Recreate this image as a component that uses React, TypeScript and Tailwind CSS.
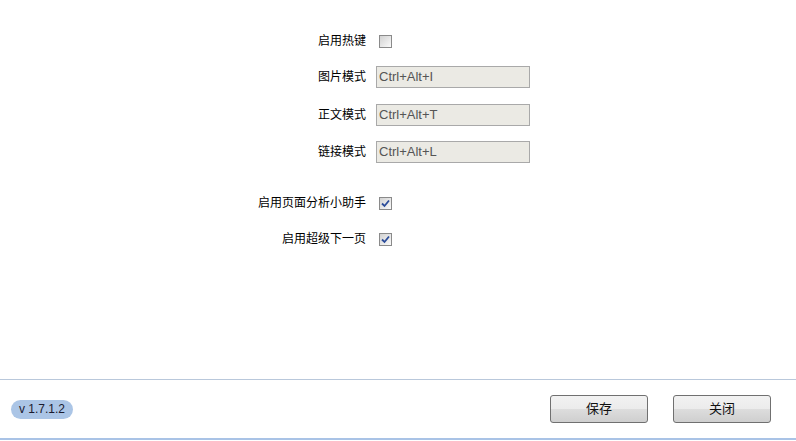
import React from "react";

const FONT = { fontFamily: '"Liberation Sans", "Noto Sans CJK SC", sans-serif' };

function Check({ checked }: { checked?: boolean }) {
  return (
    <span className="ml-[3px] relative block w-[13px] h-[13px] border border-[#8a8a8a] bg-gradient-to-br from-[#d2d2d2] to-[#fafafa]">
      {checked && (
        <svg className="absolute left-[1px] top-[1px]" width="9" height="9" viewBox="0 0 9 9">
          <path d="M1 4.5 L3.5 7 L8 1.5" fill="none" stroke="#2b4c9a" strokeWidth="1.8" />
        </svg>
      )}
    </span>
  );
}

function Row({ label, mt, children }: { label: string; mt: string; children: React.ReactNode }) {
  return (
    <div className={`flex items-center h-[22px] ${mt}`}>
      <div className="w-[366px] text-right text-[12px] text-black">{label}</div>
      <div className="ml-[10px] flex items-center">{children}</div>
    </div>
  );
}

function Field({ value }: { value: string }) {
  return (
    <div className="w-[154px] h-[22px] border border-[#a9a9a9] bg-[#ebeae4] text-[13px] text-[#555] pl-[2px] leading-[20px]">
      {value}
    </div>
  );
}

function Btn({ label }: { label: string }) {
  return (
    <button className="w-[98px] h-[28px] rounded-[3px] border border-[#707070] bg-[linear-gradient(#f2f2f2_0%,#ebebeb_50%,#dddddd_50%,#cfcfcf_100%)] text-[13px] text-[#111]">
      {label}
    </button>
  );
}

export default function App() {
  return (
    <div className="w-[796px] h-[441px] bg-white flex flex-col" style={FONT}>
      <div className="h-[380px] shrink-0 pt-[30px] border-b border-[#b9c8db]">
        <Row label="启用热键" mt="">
          <Check />
        </Row>
        <Row label="图片模式" mt="mt-[14px]">
          <Field value="Ctrl+Alt+I" />
        </Row>
        <Row label="正文模式" mt="mt-[16px]">
          <Field value="Ctrl+Alt+T" />
        </Row>
        <Row label="链接模式" mt="mt-[15px]">
          <Field value="Ctrl+Alt+L" />
        </Row>
        <Row label="启用页面分析小助手" mt="mt-[29px]">
          <Check checked />
        </Row>
        <Row label="启用超级下一页" mt="mt-[14px]">
          <Check checked />
        </Row>
      </div>
      <div className="h-[60px] shrink-0 flex items-center pl-[11px] pr-[25px] border-b-2 border-[#a9c3e6]">
        <span className="h-[19px] w-[62px] rounded-full bg-[#abc5e6] text-[12px] text-[#1a1a2e] flex items-center justify-center">
          v 1.7.1.2
        </span>
        <div className="ml-auto flex gap-[25px]">
          <Btn label="保存" />
          <Btn label="关闭" />
        </div>
      </div>
    </div>
  );
}
